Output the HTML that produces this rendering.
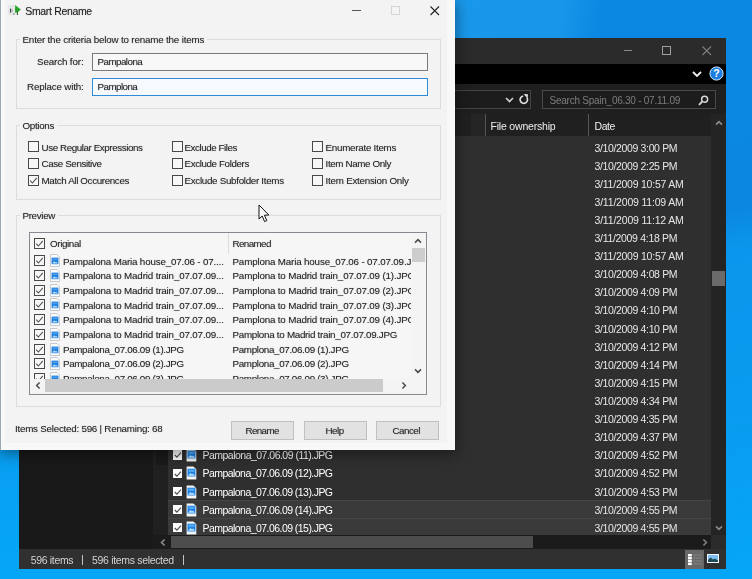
<!DOCTYPE html>
<html><head><meta charset="utf-8"><title>Smart Rename</title>
<style>
html,body{margin:0;padding:0}
body{width:752px;height:579px;overflow:hidden;position:relative;font-family:"Liberation Sans",sans-serif;
background:linear-gradient(180deg,#0b88e2 0%,#0b87e1 32%,#0a95eb 46%,#099cf0 72%,#05a6f6 100%)}
.t{position:absolute;white-space:pre;line-height:14px;height:14px;filter:blur(.4px);text-shadow:0 0 1px rgba(60,60,60,.45)}
.a{position:absolute}
#ex{position:absolute;left:19px;top:38px;width:707px;height:531px;background:#2b2b2b;overflow:hidden}
#dl{position:absolute;left:0;top:0;width:454.6px;height:449.6px;background:#f8f8f8;box-shadow:0 3px 14px 1px rgba(0,0,0,.42);overflow:hidden}
#cl{position:absolute;left:5px;top:0;width:442px;height:443px;background:#f3f3f3}
.gb{position:absolute;border:1px solid #dcdcdc;box-sizing:border-box}
.cb{position:absolute;width:11px;height:11px;box-sizing:border-box;border:1px solid #484848;background:#f7f7f7}
.btn{position:absolute;box-sizing:border-box;border:1px solid #c0c0c0;background:#e2e2e2;height:19px;top:421px;width:63px}
.xr{position:absolute;left:149px;width:543px;height:18px;background:#333}
</style></head><body>
<div class="a" style="left:726px;top:0;width:26px;height:579px;background:linear-gradient(168deg,#0b88e2 0%,#0b87e1 36%,#0a96ec 43%,#099cf0 72%,#05a6f6 100%)"></div>
<div class="a" style="left:440px;top:0;width:170px;height:40px;background:linear-gradient(100deg,#1a99eb 0%,#1796ea 70%,#0b88e2 92%)"></div>

<div id="ex">
<div class="a" style="left:0;top:0;width:707px;height:26px;background:#2b2b2b"></div>
<div class="a" style="left:605px;top:12px;width:8px;height:1px;background:#8a8a8a"></div>
<div class="a" style="left:643px;top:8px;width:9px;height:9px;box-sizing:border-box;border:1px solid #a0a0a0"></div>
<svg class="a" style="left:683px;top:8px" width="10" height="10" viewBox="0 0 10 10"><path d="M0.5 0.5 L9 9 M9 0.5 L0.5 9" stroke="#7d7d7d" stroke-width="1.1" fill="none"/></svg>
<div class="a" style="left:0;top:26px;width:707px;height:20px;background:#000"></div>
<svg class="a" style="left:673px;top:33px" width="10" height="7" viewBox="0 0 10 7"><path d="M1 1 L5 5 L9 1" stroke="#f0f0f0" stroke-width="1.8" fill="none"/></svg>
<svg class="a" style="left:690px;top:28px" width="15" height="15" viewBox="0 0 15 15"><circle cx="7.5" cy="7.5" r="6.6" fill="#1f7fe0" stroke="#cfe4fa" stroke-width="1"/><text x="7.5" y="11.2" font-size="10.5" font-weight="bold" text-anchor="middle" fill="#fff" font-family="Liberation Sans, sans-serif">?</text></svg>
<div class="a" style="left:0;top:46px;width:707px;height:30px;background:#1f1f1f"></div>
<div class="a" style="left:281px;top:52px;width:231px;height:19px;box-sizing:border-box;border:1px solid #444;background:#1c1c1c"></div>
<svg class="a" style="left:486px;top:59px" width="9" height="6" viewBox="0 0 9 6"><path d="M1 1 L4.5 4.5 L8 1" stroke="#d0d0d0" stroke-width="1.6" fill="none"/></svg>
<svg class="a" style="left:500px;top:56px" width="10" height="11" viewBox="0 0 10 11"><path d="M7.9 3.6 A3.7 3.7 0 1 1 4.2 2" stroke="#e0e0e0" stroke-width="1.6" fill="none"/><path d="M4.6 0 L9 0.2 L8.6 4.6 Z" fill="#e0e0e0"/></svg>
<div class="a" style="left:523px;top:52px;width:174px;height:19px;box-sizing:border-box;border:1px solid #4a4a4a;background:#1c1c1c"></div>
<span class="t" style="left:530.50px;top:56.00px;font-size:10px;letter-spacing:-0.248px;color:#7b7b7b;">Search Spain_06.30 - 07.11.09</span>
<svg class="a" style="left:678.7px;top:56.5px" width="11" height="11" viewBox="0 0 11 11"><circle cx="6.6" cy="4.2" r="3" stroke="#d8d8d8" stroke-width="1.5" fill="none"/><path d="M4.4 6.4 L1 9.8" stroke="#d8d8d8" stroke-width="1.9"/></svg>
<div class="a" style="left:0;top:76px;width:707px;height:22px;background:#202020"></div>
<div class="a" style="left:452px;top:76px;width:14px;height:22px;background:#252525"></div>
<div class="a" style="left:466px;top:76px;width:1px;height:22px;background:#555"></div>
<div class="a" style="left:569px;top:76px;width:1px;height:22px;background:#555"></div>
<span class="t" style="left:471.50px;top:81.00px;font-size:10.5px;letter-spacing:-0.193px;color:#ececec;">File ownership</span>
<span class="t" style="left:575.50px;top:81.00px;font-size:10.5px;letter-spacing:-0.422px;color:#ececec;">Date</span>
<div class="a" style="left:0;top:98px;width:134px;height:413px;background:#191919"></div>
<div class="a" style="left:134px;top:98px;width:15px;height:413px;background:#202020"></div>
<div class="a" style="left:137px;top:411px;width:13px;height:16px;background:#1a1a1a"></div>
<div class="a" style="left:149px;top:98px;width:543px;height:399px;background:#2f2f2f"></div>
<span class="t" style="left:575.50px;top:103.00px;font-size:10.5px;letter-spacing:-0.355px;color:#e6e6e6;">3/10/2009 3:00 PM</span>
<span class="t" style="left:575.50px;top:121.00px;font-size:10.5px;letter-spacing:-0.355px;color:#e6e6e6;">3/10/2009 2:25 PM</span>
<span class="t" style="left:575.50px;top:139.00px;font-size:10.5px;letter-spacing:-0.234px;color:#e6e6e6;">3/11/2009 10:57 AM</span>
<span class="t" style="left:575.50px;top:157.00px;font-size:10.5px;letter-spacing:-0.191px;color:#e6e6e6;">3/11/2009 11:09 AM</span>
<span class="t" style="left:575.50px;top:175.00px;font-size:10.5px;letter-spacing:-0.191px;color:#e6e6e6;">3/11/2009 11:12 AM</span>
<span class="t" style="left:575.50px;top:193.00px;font-size:10.5px;letter-spacing:-0.309px;color:#e6e6e6;">3/11/2009 4:18 PM</span>
<span class="t" style="left:575.50px;top:211.00px;font-size:10.5px;letter-spacing:-0.234px;color:#e6e6e6;">3/11/2009 10:57 AM</span>
<span class="t" style="left:575.50px;top:229.00px;font-size:10.5px;letter-spacing:-0.355px;color:#e6e6e6;">3/10/2009 4:08 PM</span>
<span class="t" style="left:575.50px;top:247.00px;font-size:10.5px;letter-spacing:-0.355px;color:#e6e6e6;">3/10/2009 4:09 PM</span>
<span class="t" style="left:575.50px;top:265.00px;font-size:10.5px;letter-spacing:-0.355px;color:#e6e6e6;">3/10/2009 4:10 PM</span>
<span class="t" style="left:575.50px;top:284.00px;font-size:10.5px;letter-spacing:-0.355px;color:#e6e6e6;">3/10/2009 4:10 PM</span>
<span class="t" style="left:575.50px;top:302.00px;font-size:10.5px;letter-spacing:-0.355px;color:#e6e6e6;">3/10/2009 4:12 PM</span>
<span class="t" style="left:575.50px;top:320.00px;font-size:10.5px;letter-spacing:-0.355px;color:#e6e6e6;">3/10/2009 4:14 PM</span>
<span class="t" style="left:575.50px;top:338.00px;font-size:10.5px;letter-spacing:-0.355px;color:#e6e6e6;">3/10/2009 4:15 PM</span>
<span class="t" style="left:575.50px;top:356.00px;font-size:10.5px;letter-spacing:-0.355px;color:#e6e6e6;">3/10/2009 4:34 PM</span>
<span class="t" style="left:575.50px;top:374.00px;font-size:10.5px;letter-spacing:-0.355px;color:#e6e6e6;">3/10/2009 4:35 PM</span>
<span class="t" style="left:575.50px;top:392.00px;font-size:10.5px;letter-spacing:-0.355px;color:#e6e6e6;">3/10/2009 4:37 PM</span>
<span class="t" style="left:575.50px;top:410.00px;font-size:10.5px;letter-spacing:-0.355px;color:#e6e6e6;">3/10/2009 4:52 PM</span>
<span class="t" style="left:575.50px;top:428.00px;font-size:10.5px;letter-spacing:-0.355px;color:#e6e6e6;">3/10/2009 4:52 PM</span>
<span class="t" style="left:575.50px;top:447.00px;font-size:10.5px;letter-spacing:-0.355px;color:#e6e6e6;">3/10/2009 4:53 PM</span>
<div class="a" style="left:149px;top:461.8px;width:543px;height:17px;background:#3a3a3a;border-top:1px solid #454545"></div>
<span class="t" style="left:575.50px;top:465.00px;font-size:10.5px;letter-spacing:-0.355px;color:#e6e6e6;">3/10/2009 4:55 PM</span>
<div class="a" style="left:149px;top:479.9px;width:543px;height:17px;background:#3a3a3a;border-top:1px solid #454545"></div>
<span class="t" style="left:575.50px;top:483.00px;font-size:10.5px;letter-spacing:-0.355px;color:#e6e6e6;">3/10/2009 4:55 PM</span>
<div class="a" style="left:153.7px;top:394.3px;width:9.6px;height:9.6px;background:#fdfdfd"></div>
<svg class="a" style="left:153.7px;top:394.3px" width="10" height="10" viewBox="0 0 10 10"><path d="M1.8 5 L3.9 7.2 L8 2.6" stroke="#4e4e4e" stroke-width="1.15" fill="none"/></svg>
<svg class="a" style="left:167.3px;top:392.2px" width="11" height="14" viewBox="0 0 11 14"><path d="M0.6 0.4 H7.4 L10.3 3.3 V13.4 H0.6 Z" fill="#f4f4f4"/><rect x="1.5" y="2.7" width="7.9" height="7.8" fill="#1a82e6"/><rect x="2.6" y="3.6" width="5.7" height="2.2" fill="#58adf5"/><path d="M2 9.8 L4.6 7 L6 8.4 L7 7.6 L9 9.8 Z" fill="#bfe0ff"/></svg>
<span class="t" style="left:183.50px;top:392.00px;font-size:10.5px;letter-spacing:-0.547px;color:#ffffff;">Pampalona_07.06.09 (10).JPG</span>
<div class="a" style="left:153.7px;top:412.4px;width:9.6px;height:9.6px;background:#fdfdfd"></div>
<svg class="a" style="left:153.7px;top:412.4px" width="10" height="10" viewBox="0 0 10 10"><path d="M1.8 5 L3.9 7.2 L8 2.6" stroke="#4e4e4e" stroke-width="1.15" fill="none"/></svg>
<svg class="a" style="left:167.3px;top:410.3px" width="11" height="14" viewBox="0 0 11 14"><path d="M0.6 0.4 H7.4 L10.3 3.3 V13.4 H0.6 Z" fill="#f4f4f4"/><rect x="1.5" y="2.7" width="7.9" height="7.8" fill="#1a82e6"/><rect x="2.6" y="3.6" width="5.7" height="2.2" fill="#58adf5"/><path d="M2 9.8 L4.6 7 L6 8.4 L7 7.6 L9 9.8 Z" fill="#bfe0ff"/></svg>
<span class="t" style="left:183.50px;top:410.00px;font-size:10.5px;letter-spacing:-0.518px;color:#ffffff;">Pampalona_07.06.09 (11).JPG</span>
<div class="a" style="left:153.7px;top:430.5px;width:9.6px;height:9.6px;background:#fdfdfd"></div>
<svg class="a" style="left:153.7px;top:430.5px" width="10" height="10" viewBox="0 0 10 10"><path d="M1.8 5 L3.9 7.2 L8 2.6" stroke="#4e4e4e" stroke-width="1.15" fill="none"/></svg>
<svg class="a" style="left:167.3px;top:428.4px" width="11" height="14" viewBox="0 0 11 14"><path d="M0.6 0.4 H7.4 L10.3 3.3 V13.4 H0.6 Z" fill="#f4f4f4"/><rect x="1.5" y="2.7" width="7.9" height="7.8" fill="#1a82e6"/><rect x="2.6" y="3.6" width="5.7" height="2.2" fill="#58adf5"/><path d="M2 9.8 L4.6 7 L6 8.4 L7 7.6 L9 9.8 Z" fill="#bfe0ff"/></svg>
<span class="t" style="left:183.50px;top:428.00px;font-size:10.5px;letter-spacing:-0.547px;color:#ffffff;">Pampalona_07.06.09 (12).JPG</span>
<div class="a" style="left:153.7px;top:448.6px;width:9.6px;height:9.6px;background:#fdfdfd"></div>
<svg class="a" style="left:153.7px;top:448.6px" width="10" height="10" viewBox="0 0 10 10"><path d="M1.8 5 L3.9 7.2 L8 2.6" stroke="#4e4e4e" stroke-width="1.15" fill="none"/></svg>
<svg class="a" style="left:167.3px;top:446.5px" width="11" height="14" viewBox="0 0 11 14"><path d="M0.6 0.4 H7.4 L10.3 3.3 V13.4 H0.6 Z" fill="#f4f4f4"/><rect x="1.5" y="2.7" width="7.9" height="7.8" fill="#1a82e6"/><rect x="2.6" y="3.6" width="5.7" height="2.2" fill="#58adf5"/><path d="M2 9.8 L4.6 7 L6 8.4 L7 7.6 L9 9.8 Z" fill="#bfe0ff"/></svg>
<span class="t" style="left:183.50px;top:447.00px;font-size:10.5px;letter-spacing:-0.547px;color:#ffffff;">Pampalona_07.06.09 (13).JPG</span>
<div class="a" style="left:153.7px;top:466.7px;width:9.6px;height:9.6px;background:#fdfdfd"></div>
<svg class="a" style="left:153.7px;top:466.7px" width="10" height="10" viewBox="0 0 10 10"><path d="M1.8 5 L3.9 7.2 L8 2.6" stroke="#4e4e4e" stroke-width="1.15" fill="none"/></svg>
<svg class="a" style="left:167.3px;top:464.6px" width="11" height="14" viewBox="0 0 11 14"><path d="M0.6 0.4 H7.4 L10.3 3.3 V13.4 H0.6 Z" fill="#f4f4f4"/><rect x="1.5" y="2.7" width="7.9" height="7.8" fill="#1a82e6"/><rect x="2.6" y="3.6" width="5.7" height="2.2" fill="#58adf5"/><path d="M2 9.8 L4.6 7 L6 8.4 L7 7.6 L9 9.8 Z" fill="#bfe0ff"/></svg>
<span class="t" style="left:183.50px;top:465.00px;font-size:10.5px;letter-spacing:-0.547px;color:#ffffff;">Pampalona_07.06.09 (14).JPG</span>
<div class="a" style="left:153.7px;top:484.8px;width:9.6px;height:9.6px;background:#fdfdfd"></div>
<svg class="a" style="left:153.7px;top:484.8px" width="10" height="10" viewBox="0 0 10 10"><path d="M1.8 5 L3.9 7.2 L8 2.6" stroke="#4e4e4e" stroke-width="1.15" fill="none"/></svg>
<svg class="a" style="left:167.3px;top:482.7px" width="11" height="14" viewBox="0 0 11 14"><path d="M0.6 0.4 H7.4 L10.3 3.3 V13.4 H0.6 Z" fill="#f4f4f4"/><rect x="1.5" y="2.7" width="7.9" height="7.8" fill="#1a82e6"/><rect x="2.6" y="3.6" width="5.7" height="2.2" fill="#58adf5"/><path d="M2 9.8 L4.6 7 L6 8.4 L7 7.6 L9 9.8 Z" fill="#bfe0ff"/></svg>
<span class="t" style="left:183.50px;top:483.00px;font-size:10.5px;letter-spacing:-0.547px;color:#ffffff;">Pampalona_07.06.09 (15).JPG</span>
<div class="a" style="left:692px;top:76px;width:15px;height:421px;background:#242424"></div>
<div class="a" style="left:693px;top:233px;width:13px;height:15px;background:#6a6a6a"></div>
<svg class="a" style="left:696px;top:82px" width="8" height="6" viewBox="0 0 8 6"><path d="M1 4.6 L4 1.6 L7 4.6" stroke="#8c8c8c" stroke-width="1.6" fill="none"/></svg>
<svg class="a" style="left:696px;top:487px" width="8" height="6" viewBox="0 0 8 6"><path d="M1 1.4 L4 4.4 L7 1.4" stroke="#8c8c8c" stroke-width="1.6" fill="none"/></svg>
<div class="a" style="left:134px;top:497px;width:558px;height:14px;background:#1b1b1b"></div><div class="a" style="left:692px;top:497px;width:15px;height:14px;background:#2b2b2b"></div>
<div class="a" style="left:152px;top:498px;width:362px;height:12px;background:#4d4d4d"></div>
<svg class="a" style="left:141px;top:500px" width="6" height="9" viewBox="0 0 6 9"><path d="M4.6 1.5 L1.6 4.5 L4.6 7.5" stroke="#8c8c8c" stroke-width="1.6" fill="none"/></svg>
<svg class="a" style="left:683px;top:500px" width="6" height="9" viewBox="0 0 6 9"><path d="M1.4 1.5 L4.4 4.5 L1.4 7.5" stroke="#808080" stroke-width="1.6" fill="none"/></svg>
<div class="a" style="left:0;top:511px;width:707px;height:20px;background:#303030"></div>
<span class="t" style="left:11.75px;top:515.00px;font-size:10.5px;letter-spacing:-0.337px;color:#d2d2d2;">596 items</span>
<div class="a" style="left:63px;top:517px;width:1px;height:10px;background:#c4c4c4"></div>
<span class="t" style="left:73.00px;top:515.00px;font-size:10.5px;letter-spacing:-0.323px;color:#d2d2d2;">596 items selected</span>
<div class="a" style="left:164px;top:517px;width:1px;height:10px;background:#c4c4c4"></div>
<div class="a" style="left:666px;top:512px;width:19px;height:19px;background:#686868"></div>
<svg class="a" style="left:669px;top:516px" width="14" height="12" viewBox="0 0 14 12"><rect x="0" y="0" width="3.8" height="2.4" fill="#fff"/><rect x="0" y="2.9" width="3.8" height="2.4" fill="#fff"/><rect x="0" y="5.8" width="3.8" height="2.4" fill="#fff"/><rect x="0" y="8.7" width="3.8" height="2.4" fill="#fff"/><rect x="5" y="0.4" width="9" height="1.4" fill="#7c7c7c"/><rect x="5" y="3.3" width="9" height="1.4" fill="#7c7c7c"/><rect x="5" y="6.2" width="9" height="1.4" fill="#7c7c7c"/><rect x="5" y="9.1" width="9" height="1.4" fill="#7c7c7c"/></svg>
<svg class="a" style="left:688px;top:516px" width="12" height="9" viewBox="0 0 12 9"><rect x="0" y="0" width="12" height="9" fill="#f4f8fc"/><rect x="1" y="1" width="10" height="7" fill="#7fc1f2"/><path d="M1 6 L3.5 3.6 L6 5.4 L8 4.4 L11 6.4 V8 H1 Z" fill="#1d4a55"/></svg>
</div>
<div id="dl"><div id="cl"></div>
<div class="a" style="left:0;top:0;width:1px;height:450px;background:#9aa7b5"></div>
<svg class="a" style="left:8px;top:3.5px" width="13" height="12" viewBox="0 0 13 12"><rect x="0" y="1" width="7.2" height="10.6" rx="1" fill="#e6e8e8"/><path d="M2.7 4.6 L2.5 8.6 M5.6 9.6 L6.3 10.5" stroke="#3a3a3a" stroke-width="1.1" fill="none"/><path d="M4.4 5.6 L4.2 8" stroke="#9a9a9a" stroke-width="0.8" fill="none"/><path d="M7.1 1 L12.9 5.6 L10.4 7.8 L7.1 9 Z" fill="#2aa82a"/><path d="M9.4 7.2 L9.4 11" stroke="#2a5f2a" stroke-width="1.1" fill="none"/><path d="M7.2 5.2 L8.6 5.8" stroke="#276427" stroke-width="0.9"/></svg>
<span class="t" style="left:25.30px;top:4.00px;font-size:10.5px;letter-spacing:-0.342px;color:#222;">Smart Rename</span>
<div class="a" style="left:352px;top:10px;width:9px;height:1px;background:#555"></div>
<div class="a" style="left:391px;top:6px;width:9px;height:9px;box-sizing:border-box;border:1px solid #d6d6d6"></div>
<svg class="a" style="left:430px;top:6px" width="10" height="10" viewBox="0 0 10 10"><path d="M0.5 0.5 L9 9 M9 0.5 L0.5 9" stroke="#222" stroke-width="1.1" fill="none"/></svg>
<div class="gb" style="left:16px;top:39px;width:425px;height:70px"></div>
<div class="a" style="left:20px;top:34px;width:187px;height:12px;background:#f3f3f3"></div>
<span class="t" style="left:22.50px;top:33.00px;font-size:9.8px;letter-spacing:-0.177px;color:#262626;">Enter the criteria below to rename the items</span>
<span class="t" style="left:37.00px;top:55.00px;font-size:9.8px;letter-spacing:-0.129px;color:#262626;">Search for:</span>
<span class="t" style="left:27.00px;top:80.00px;font-size:9.8px;letter-spacing:-0.178px;color:#262626;">Replace with:</span>
<div class="a" style="left:92px;top:53px;width:336px;height:18px;box-sizing:border-box;border:1px solid #7a7a7a;background:#f8f8f8"></div>
<div class="a" style="left:92px;top:78px;width:336px;height:18px;box-sizing:border-box;border:1px solid #2f8ad8;background:#f7fafc"></div>
<span class="t" style="left:97.60px;top:55.00px;font-size:9.8px;letter-spacing:-0.553px;color:#262626;">Pampalona</span>
<span class="t" style="left:97.60px;top:80.00px;font-size:9.8px;letter-spacing:-0.566px;color:#262626;">Pamplona</span>
<div class="gb" style="left:16px;top:125px;width:425px;height:75px"></div>
<div class="a" style="left:20px;top:120px;width:37px;height:12px;background:#f3f3f3"></div>
<span class="t" style="left:22.50px;top:119.00px;font-size:9.8px;letter-spacing:-0.324px;color:#262626;">Options</span>
<div class="cb" style="left:28.0px;top:141.0px"></div>
<span class="t" style="left:41.50px;top:141.00px;font-size:9.8px;letter-spacing:-0.415px;color:#262626;">Use Regular Expressions</span>
<div class="cb" style="left:28.0px;top:158.0px"></div>
<span class="t" style="left:41.50px;top:157.00px;font-size:9.8px;letter-spacing:-0.383px;color:#262626;">Case Sensitive</span>
<div class="cb" style="left:28.0px;top:175.0px"></div>
<svg class="a" style="left:28.0px;top:175.0px" width="11" height="11" viewBox="0 0 11 11"><path d="M2.2 5.6 L4.4 8 L8.8 2.8" stroke="#505050" stroke-width="1.05" fill="none"/></svg>
<span class="t" style="left:41.50px;top:174.00px;font-size:9.8px;letter-spacing:-0.362px;color:#262626;">Match All Occurences</span>
<div class="cb" style="left:171.5px;top:141.0px"></div>
<span class="t" style="left:184.50px;top:141.00px;font-size:9.8px;letter-spacing:-0.444px;color:#262626;">Exclude Files</span>
<div class="cb" style="left:171.5px;top:158.0px"></div>
<span class="t" style="left:184.50px;top:157.00px;font-size:9.8px;letter-spacing:-0.383px;color:#262626;">Exclude Folders</span>
<div class="cb" style="left:171.5px;top:175.0px"></div>
<span class="t" style="left:184.50px;top:174.00px;font-size:9.8px;letter-spacing:-0.299px;color:#262626;">Exclude Subfolder Items</span>
<div class="cb" style="left:312.0px;top:141.0px"></div>
<span class="t" style="left:325.60px;top:141.00px;font-size:9.8px;letter-spacing:-0.274px;color:#262626;">Enumerate Items</span>
<div class="cb" style="left:312.0px;top:158.0px"></div>
<span class="t" style="left:325.60px;top:157.00px;font-size:9.8px;letter-spacing:-0.377px;color:#262626;">Item Name Only</span>
<div class="cb" style="left:312.0px;top:175.0px"></div>
<span class="t" style="left:325.60px;top:174.00px;font-size:9.8px;letter-spacing:-0.246px;color:#262626;">Item Extension Only</span>
<div class="gb" style="left:16px;top:215px;width:425px;height:192px"></div>
<div class="a" style="left:20px;top:210px;width:38px;height:12px;background:#f3f3f3"></div>
<span class="t" style="left:22.50px;top:209.00px;font-size:9.8px;letter-spacing:-0.337px;color:#262626;">Preview</span>
<div class="a" style="left:29px;top:232px;width:398px;height:163px;box-sizing:border-box;border:1px solid #868a90;background:#f6f6f6;overflow:hidden">
<div class="a" style="left:197.5px;top:0;width:1px;height:21px;background:#dcdcdc"></div>
<div class="cb" style="left:4.3px;top:4.8px"></div>
<svg class="a" style="left:4.3px;top:4.8px" width="11" height="11" viewBox="0 0 11 11"><path d="M2.2 5.6 L4.4 8 L8.8 2.8" stroke="#505050" stroke-width="1.05" fill="none"/></svg>
<span class="t" style="left:20.00px;top:4.00px;font-size:9.8px;letter-spacing:-0.371px;color:#262626;">Original</span>
<span class="t" style="left:202.50px;top:4.00px;font-size:9.8px;letter-spacing:-0.598px;color:#262626;">Renamed</span>
<div class="cb" style="left:4.3px;top:22.0px"></div>
<svg class="a" style="left:4.3px;top:22.0px" width="11" height="11" viewBox="0 0 11 11"><path d="M2.2 5.6 L4.4 8 L8.8 2.8" stroke="#505050" stroke-width="1.05" fill="none"/></svg>
<svg class="a" style="left:19.7px;top:21.2px" width="10" height="13" viewBox="0 0 10 13"><path d="M0.5 0.5 H7 L9.5 3 V12.5 H0.5 Z" fill="#fdfdfd" stroke="#b9bdc2" stroke-width="0.8"/><rect x="1.6" y="3.6" width="6.8" height="6.6" fill="#1a7ddd"/><path d="M2.2 9.6 L4.2 7.2 L5.4 8.4 L6.2 7.8 L7.8 9.6 Z" fill="#bfe0ff"/><rect x="2.5" y="4.4" width="5" height="1.8" fill="#4a9eee"/></svg>
<span class="t" style="left:33.00px;top:22.00px;font-size:9.8px;letter-spacing:-0.165px;color:#262626;">Pampalona Maria house_07.06 - 07....</span>
<span class="t" style="left:202.50px;top:22.00px;font-size:9.8px;letter-spacing:-0.167px;color:#262626;">Pamplona Maria house_07.06 - 07.07.09.JPG</span>
<div class="cb" style="left:4.3px;top:36.8px"></div>
<svg class="a" style="left:4.3px;top:36.8px" width="11" height="11" viewBox="0 0 11 11"><path d="M2.2 5.6 L4.4 8 L8.8 2.8" stroke="#505050" stroke-width="1.05" fill="none"/></svg>
<svg class="a" style="left:19.7px;top:35.9px" width="10" height="13" viewBox="0 0 10 13"><path d="M0.5 0.5 H7 L9.5 3 V12.5 H0.5 Z" fill="#fdfdfd" stroke="#b9bdc2" stroke-width="0.8"/><rect x="1.6" y="3.6" width="6.8" height="6.6" fill="#1a7ddd"/><path d="M2.2 9.6 L4.2 7.2 L5.4 8.4 L6.2 7.8 L7.8 9.6 Z" fill="#bfe0ff"/><rect x="2.5" y="4.4" width="5" height="1.8" fill="#4a9eee"/></svg>
<span class="t" style="left:33.00px;top:36.00px;font-size:9.8px;letter-spacing:-0.161px;color:#262626;">Pampalona to Madrid train_07.07.09...</span>
<span class="t" style="left:202.50px;top:36.00px;font-size:9.8px;letter-spacing:-0.171px;color:#262626;">Pamplona to Madrid train_07.07.09 (1).JPG</span>
<div class="cb" style="left:4.3px;top:51.5px"></div>
<svg class="a" style="left:4.3px;top:51.5px" width="11" height="11" viewBox="0 0 11 11"><path d="M2.2 5.6 L4.4 8 L8.8 2.8" stroke="#505050" stroke-width="1.05" fill="none"/></svg>
<svg class="a" style="left:19.7px;top:50.7px" width="10" height="13" viewBox="0 0 10 13"><path d="M0.5 0.5 H7 L9.5 3 V12.5 H0.5 Z" fill="#fdfdfd" stroke="#b9bdc2" stroke-width="0.8"/><rect x="1.6" y="3.6" width="6.8" height="6.6" fill="#1a7ddd"/><path d="M2.2 9.6 L4.2 7.2 L5.4 8.4 L6.2 7.8 L7.8 9.6 Z" fill="#bfe0ff"/><rect x="2.5" y="4.4" width="5" height="1.8" fill="#4a9eee"/></svg>
<span class="t" style="left:33.00px;top:51.00px;font-size:9.8px;letter-spacing:-0.161px;color:#262626;">Pampalona to Madrid train_07.07.09...</span>
<span class="t" style="left:202.50px;top:51.00px;font-size:9.8px;letter-spacing:-0.171px;color:#262626;">Pamplona to Madrid train_07.07.09 (2).JPG</span>
<div class="cb" style="left:4.3px;top:66.2px"></div>
<svg class="a" style="left:4.3px;top:66.2px" width="11" height="11" viewBox="0 0 11 11"><path d="M2.2 5.6 L4.4 8 L8.8 2.8" stroke="#505050" stroke-width="1.05" fill="none"/></svg>
<svg class="a" style="left:19.7px;top:65.4px" width="10" height="13" viewBox="0 0 10 13"><path d="M0.5 0.5 H7 L9.5 3 V12.5 H0.5 Z" fill="#fdfdfd" stroke="#b9bdc2" stroke-width="0.8"/><rect x="1.6" y="3.6" width="6.8" height="6.6" fill="#1a7ddd"/><path d="M2.2 9.6 L4.2 7.2 L5.4 8.4 L6.2 7.8 L7.8 9.6 Z" fill="#bfe0ff"/><rect x="2.5" y="4.4" width="5" height="1.8" fill="#4a9eee"/></svg>
<span class="t" style="left:33.00px;top:66.00px;font-size:9.8px;letter-spacing:-0.161px;color:#262626;">Pampalona to Madrid train_07.07.09...</span>
<span class="t" style="left:202.50px;top:66.00px;font-size:9.8px;letter-spacing:-0.171px;color:#262626;">Pamplona to Madrid train_07.07.09 (3).JPG</span>
<div class="cb" style="left:4.3px;top:81.0px"></div>
<svg class="a" style="left:4.3px;top:81.0px" width="11" height="11" viewBox="0 0 11 11"><path d="M2.2 5.6 L4.4 8 L8.8 2.8" stroke="#505050" stroke-width="1.05" fill="none"/></svg>
<svg class="a" style="left:19.7px;top:80.2px" width="10" height="13" viewBox="0 0 10 13"><path d="M0.5 0.5 H7 L9.5 3 V12.5 H0.5 Z" fill="#fdfdfd" stroke="#b9bdc2" stroke-width="0.8"/><rect x="1.6" y="3.6" width="6.8" height="6.6" fill="#1a7ddd"/><path d="M2.2 9.6 L4.2 7.2 L5.4 8.4 L6.2 7.8 L7.8 9.6 Z" fill="#bfe0ff"/><rect x="2.5" y="4.4" width="5" height="1.8" fill="#4a9eee"/></svg>
<span class="t" style="left:33.00px;top:80.00px;font-size:9.8px;letter-spacing:-0.161px;color:#262626;">Pampalona to Madrid train_07.07.09...</span>
<span class="t" style="left:202.50px;top:80.00px;font-size:9.8px;letter-spacing:-0.171px;color:#262626;">Pamplona to Madrid train_07.07.09 (4).JPG</span>
<div class="cb" style="left:4.3px;top:95.8px"></div>
<svg class="a" style="left:4.3px;top:95.8px" width="11" height="11" viewBox="0 0 11 11"><path d="M2.2 5.6 L4.4 8 L8.8 2.8" stroke="#505050" stroke-width="1.05" fill="none"/></svg>
<svg class="a" style="left:19.7px;top:94.9px" width="10" height="13" viewBox="0 0 10 13"><path d="M0.5 0.5 H7 L9.5 3 V12.5 H0.5 Z" fill="#fdfdfd" stroke="#b9bdc2" stroke-width="0.8"/><rect x="1.6" y="3.6" width="6.8" height="6.6" fill="#1a7ddd"/><path d="M2.2 9.6 L4.2 7.2 L5.4 8.4 L6.2 7.8 L7.8 9.6 Z" fill="#bfe0ff"/><rect x="2.5" y="4.4" width="5" height="1.8" fill="#4a9eee"/></svg>
<span class="t" style="left:33.00px;top:95.00px;font-size:9.8px;letter-spacing:-0.161px;color:#262626;">Pampalona to Madrid train_07.07.09...</span>
<span class="t" style="left:202.50px;top:95.00px;font-size:9.8px;letter-spacing:-0.279px;color:#262626;">Pamplona to Madrid train_07.07.09.JPG</span>
<div class="cb" style="left:4.3px;top:110.5px"></div>
<svg class="a" style="left:4.3px;top:110.5px" width="11" height="11" viewBox="0 0 11 11"><path d="M2.2 5.6 L4.4 8 L8.8 2.8" stroke="#505050" stroke-width="1.05" fill="none"/></svg>
<svg class="a" style="left:19.7px;top:109.7px" width="10" height="13" viewBox="0 0 10 13"><path d="M0.5 0.5 H7 L9.5 3 V12.5 H0.5 Z" fill="#fdfdfd" stroke="#b9bdc2" stroke-width="0.8"/><rect x="1.6" y="3.6" width="6.8" height="6.6" fill="#1a7ddd"/><path d="M2.2 9.6 L4.2 7.2 L5.4 8.4 L6.2 7.8 L7.8 9.6 Z" fill="#bfe0ff"/><rect x="2.5" y="4.4" width="5" height="1.8" fill="#4a9eee"/></svg>
<span class="t" style="left:33.00px;top:110.00px;font-size:9.8px;letter-spacing:-0.341px;color:#262626;">Pampalona_07.06.09 (1).JPG</span>
<span class="t" style="left:202.50px;top:110.00px;font-size:9.8px;letter-spacing:-0.319px;color:#262626;">Pamplona_07.06.09 (1).JPG</span>
<div class="cb" style="left:4.3px;top:125.2px"></div>
<svg class="a" style="left:4.3px;top:125.2px" width="11" height="11" viewBox="0 0 11 11"><path d="M2.2 5.6 L4.4 8 L8.8 2.8" stroke="#505050" stroke-width="1.05" fill="none"/></svg>
<svg class="a" style="left:19.7px;top:124.4px" width="10" height="13" viewBox="0 0 10 13"><path d="M0.5 0.5 H7 L9.5 3 V12.5 H0.5 Z" fill="#fdfdfd" stroke="#b9bdc2" stroke-width="0.8"/><rect x="1.6" y="3.6" width="6.8" height="6.6" fill="#1a7ddd"/><path d="M2.2 9.6 L4.2 7.2 L5.4 8.4 L6.2 7.8 L7.8 9.6 Z" fill="#bfe0ff"/><rect x="2.5" y="4.4" width="5" height="1.8" fill="#4a9eee"/></svg>
<span class="t" style="left:33.00px;top:124.00px;font-size:9.8px;letter-spacing:-0.341px;color:#262626;">Pampalona_07.06.09 (2).JPG</span>
<span class="t" style="left:202.50px;top:124.00px;font-size:9.8px;letter-spacing:-0.319px;color:#262626;">Pamplona_07.06.09 (2).JPG</span>
<div class="cb" style="left:4.3px;top:140.0px"></div>
<svg class="a" style="left:4.3px;top:140.0px" width="11" height="11" viewBox="0 0 11 11"><path d="M2.2 5.6 L4.4 8 L8.8 2.8" stroke="#505050" stroke-width="1.05" fill="none"/></svg>
<svg class="a" style="left:19.7px;top:139.2px" width="10" height="13" viewBox="0 0 10 13"><path d="M0.5 0.5 H7 L9.5 3 V12.5 H0.5 Z" fill="#fdfdfd" stroke="#b9bdc2" stroke-width="0.8"/><rect x="1.6" y="3.6" width="6.8" height="6.6" fill="#1a7ddd"/><path d="M2.2 9.6 L4.2 7.2 L5.4 8.4 L6.2 7.8 L7.8 9.6 Z" fill="#bfe0ff"/><rect x="2.5" y="4.4" width="5" height="1.8" fill="#4a9eee"/></svg>
<span class="t" style="left:33.00px;top:139.00px;font-size:9.8px;letter-spacing:-0.341px;color:#262626;">Pampalona_07.06.09 (3).JPG</span>
<span class="t" style="left:202.50px;top:139.00px;font-size:9.8px;letter-spacing:-0.319px;color:#262626;">Pamplona_07.06.09 (3).JPG</span>
<div class="a" style="left:381px;top:0;width:15px;height:146px;background:#f4f4f4"></div>
<div class="a" style="left:382px;top:15px;width:13px;height:14px;background:#cdcdcd"></div>
<svg class="a" style="left:384px;top:5px" width="8" height="6" viewBox="0 0 8 6"><path d="M1 4.6 L4 1.6 L7 4.6" stroke="#4a4a4a" stroke-width="1.5" fill="none"/></svg>
<svg class="a" style="left:384px;top:135px" width="8" height="6" viewBox="0 0 8 6"><path d="M1 1.4 L4 4.4 L7 1.4" stroke="#4a4a4a" stroke-width="1.5" fill="none"/></svg>
<div class="a" style="left:0;top:145.6px;width:396px;height:15px;background:#f4f4f4"></div>
<div class="a" style="left:15.4px;top:146.0px;width:337.6px;height:12.5px;background:#cbcbcb"></div>
<svg class="a" style="left:5px;top:148px" width="6" height="9" viewBox="0 0 6 9"><path d="M4.6 1.5 L1.6 4.5 L4.6 7.5" stroke="#4a4a4a" stroke-width="1.5" fill="none"/></svg>
<svg class="a" style="left:371px;top:148px" width="6" height="9" viewBox="0 0 6 9"><path d="M1.4 1.5 L4.4 4.5 L1.4 7.5" stroke="#4a4a4a" stroke-width="1.5" fill="none"/></svg>
</div>
<span class="t" style="left:15.00px;top:422.00px;font-size:9.8px;letter-spacing:-0.238px;color:#262626;">Items Selected: 596 | Renaming: 68</span>
<div class="btn" style="left:231px"></div>
<div class="btn" style="left:304px"></div>
<div class="btn" style="left:376px"></div>
<span class="t" style="left:245.50px;top:424.00px;font-size:9.8px;letter-spacing:-0.622px;color:#262626;">Rename</span>
<span class="t" style="left:325.50px;top:424.00px;font-size:9.8px;letter-spacing:-0.464px;color:#262626;">Help</span>
<span class="t" style="left:392.50px;top:424.00px;font-size:9.8px;letter-spacing:-0.500px;color:#262626;">Cancel</span>
<svg class="a" style="left:258px;top:204px" width="12" height="19" viewBox="0 0 12 19"><path d="M1 1 L1 15 L4.2 12 L6.6 17.6 L8.8 16.6 L6.4 11.2 L10.8 11 Z" fill="#fff" stroke="#111" stroke-width="1"/></svg>
</div>
</body></html>
